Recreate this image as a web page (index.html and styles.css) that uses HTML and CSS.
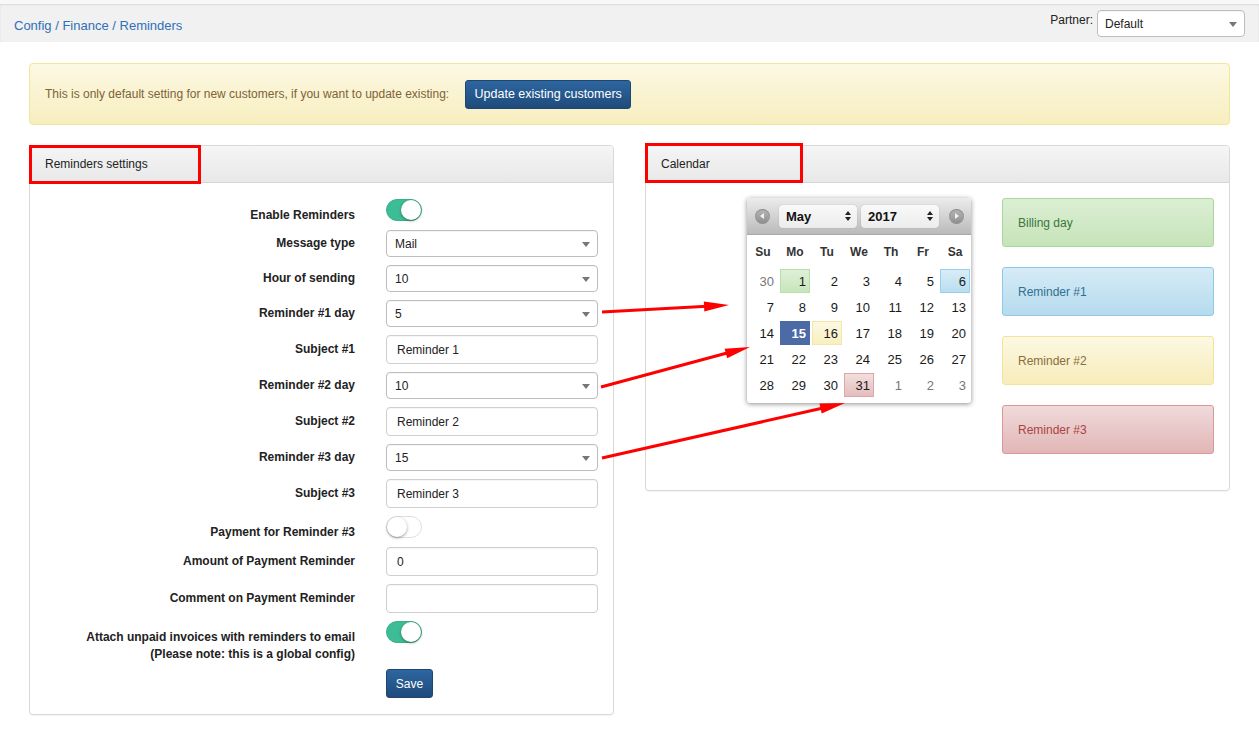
FILE: index.html
```html
<!DOCTYPE html>
<html>
<head>
<meta charset="utf-8">
<title>Reminders</title>
<link rel="stylesheet" href="styles.css">
</head>
<body>
<div class="topstrip"></div>
<header class="topbar">
  <div class="crumbs"><a>Config</a> / <a>Finance</a> / <a>Reminders</a></div>
  <div class="partner">
    <span class="partner-label">Partner:</span>
    <div class="select partner-select"><span>Default</span><i class="caret"></i></div>
  </div>
</header>

<main class="content">
  <div class="alert">
    <span>This is only default setting for new customers, if you want to update existing:</span>
    <button class="btn btn-primary btn-update">Update existing customers</button>
  </div>

  <div class="panels">
    <section class="panel panel-left">
      <div class="panel-heading"><span>Reminders settings</span><div class="mark mark-left"></div></div>
      <div class="panel-body form">
        <label class="lbl lbl-t">Enable Reminders</label>
        <div class="toggle on"><i></i></div>

        <label class="lbl">Message type</label>
        <div class="select"><span>Mail</span><i class="caret"></i></div>

        <label class="lbl">Hour of sending</label>
        <div class="select"><span>10</span><i class="caret"></i></div>

        <label class="lbl">Reminder #1 day</label>
        <div class="select"><span>5</span><i class="caret"></i></div>

        <label class="lbl">Subject #1</label>
        <div class="input">Reminder 1</div>

        <label class="lbl">Reminder #2 day</label>
        <div class="select"><span>10</span><i class="caret"></i></div>

        <label class="lbl">Subject #2</label>
        <div class="input">Reminder 2</div>

        <label class="lbl">Reminder #3 day</label>
        <div class="select"><span>15</span><i class="caret"></i></div>

        <label class="lbl">Subject #3</label>
        <div class="input">Reminder 3</div>

        <label class="lbl lbl-t">Payment for Reminder #3</label>
        <div class="toggle off"><i></i></div>

        <label class="lbl">Amount of Payment Reminder</label>
        <div class="input">0</div>

        <label class="lbl">Comment on Payment Reminder</label>
        <div class="input"></div>

        <label class="lbl lbl-t">Attach unpaid invoices with reminders to email<br>(Please note: this is a global config)</label>
        <div class="toggle on"><i></i></div>

        <div></div>
        <div><button class="btn btn-primary btn-save">Save</button></div>
      </div>
    </section>

    <section class="panel panel-right">
      <div class="panel-heading"><span>Calendar</span><div class="mark mark-right"></div></div>
      <div class="panel-body cal-body">
        <div class="datepicker">
          <div class="dp-head">
            <span class="dp-nav dp-prev"></span>
            <div class="dp-select dp-month"><b>May</b><svg class="updown" width="6" height="10" viewBox="0 0 6 10"><path d="M3 0L6 4H0z M3 10L0 6H6z" fill="#222"/></svg></div>
            <div class="dp-select dp-year"><b>2017</b><svg class="updown" width="6" height="10" viewBox="0 0 6 10"><path d="M3 0L6 4H0z M3 10L0 6H6z" fill="#222"/></svg></div>
            <span class="dp-nav dp-next"></span>
          </div>
          <div class="dp-grid dp-dow">
            <span>Su</span><span>Mo</span><span>Tu</span><span>We</span><span>Th</span><span>Fr</span><span>Sa</span>
          </div>
          <div class="dp-grid dp-days">
            <span class="other">30</span><span class="d-green">1</span><span>2</span><span>3</span><span>4</span><span>5</span><span class="d-blue">6</span>
            <span>7</span><span>8</span><span>9</span><span>10</span><span>11</span><span>12</span><span>13</span>
            <span>14</span><span class="d-active">15</span><span class="d-yellow">16</span><span>17</span><span>18</span><span>19</span><span>20</span>
            <span>21</span><span>22</span><span>23</span><span>24</span><span>25</span><span>26</span><span>27</span>
            <span>28</span><span>29</span><span>30</span><span class="d-red">31</span><span class="other">1</span><span class="other">2</span><span class="other">3</span>
          </div>
        </div>
        <div class="legend">
          <div class="tag tag-success">Billing day</div>
          <div class="tag tag-info">Reminder #1</div>
          <div class="tag tag-warning">Reminder #2</div>
          <div class="tag tag-danger">Reminder #3</div>
        </div>
      </div>
    </section>
  </div>
</main>

<svg class="arrows" width="1259" height="731" viewBox="0 0 1259 731">
  <g fill="#ff0000" stroke="none">
    <line x1="602" y1="312" x2="707" y2="306.2" stroke="#ff0000" stroke-width="3"/>
    <polygon points="729,305 704.3,311.4 703.8,301.4"/>
    <line x1="601" y1="387" x2="728" y2="352.8" stroke="#ff0000" stroke-width="3"/>
    <polygon points="750,347 727.2,358.3 724.6,348.7"/>
    <line x1="602" y1="458" x2="823" y2="408" stroke="#ff0000" stroke-width="3"/>
    <polygon points="845,403 821.7,413.4 819.5,403.6"/>
  </g>
</svg>
</body>
</html>
```

FILE: styles.css
```css
* { box-sizing: border-box; }

html, body {
  margin: 0;
  padding: 0;
  background: #fff;
}

body {
  font-family: "Liberation Sans", Arial, Helvetica, sans-serif;
  font-size: 12px;
  color: #333;
  width: 1259px;
  height: 731px;
  overflow: hidden;
  position: relative;
}

.topstrip {
  height: 4px;
  background: #f8f8f8;
}

.topbar {
  height: 38px;
  background: #f1f1f1;
  box-shadow: inset 0 1px 2px rgba(0, 0, 0, 0.10);
  display: flex;
  justify-content: space-between;
  align-items: center;
  padding: 0 14px;
}

.crumbs {
  font-size: 13px;
  color: #2f70b8;
  padding-top: 4px;
}

.crumbs a { color: #2f70b8; }

.partner {
  display: flex;
  align-items: flex-start;
  height: 27px;
  margin-top: 1px;
}

.partner-label {
  color: #222;
  margin-right: 4px;
  padding-top: 3px;
}

.select, .input {
  position: relative;
  height: 27px;
  width: 212px;
  border: 1px solid #bdbdbd;
  border-radius: 4px;
  background: #fff;
  display: flex;
  align-items: center;
  padding-left: 8px;
  color: #222;
  box-shadow: inset 0 1px 1px rgba(0, 0, 0, 0.04);
}

.input {
  height: 29px;
  padding-left: 10px;
  border-color: #cfcfcf;
}

.partner-select {
  width: 148px;
  padding-left: 7px;
}

.caret {
  position: absolute;
  right: 7px;
  top: 50%;
  margin-top: -2px;
  width: 0;
  height: 0;
  border-left: 4px solid transparent;
  border-right: 4px solid transparent;
  border-top: 5px solid #777;
}

.content {
  padding: 21px 29px 0 29px;
}

.alert {
  height: 62px;
  display: flex;
  align-items: center;
  padding: 0 15px;
  border: 1px solid #f3e59a;
  border-radius: 4px;
  background: linear-gradient(#fcf8e3, #f7eebf);
  color: #7d6335;
}

.btn {
  font-family: "Liberation Sans", Arial, Helvetica, sans-serif;
  font-size: 12px;
  color: #fff;
  border-radius: 3px;
  cursor: pointer;
  padding: 0;
}

.btn-primary {
  background: linear-gradient(#2d66a0, #1f4b7b);
  border: 1px solid #1d4672;
}

.btn-update {
  margin-left: 16px;
  height: 29px;
  width: 166px;
  font-size: 12.5px;
}

.btn-save {
  height: 29px;
  width: 47px;
}

.panels {
  margin-top: 20px;
  display: grid;
  grid-template-columns: 585px 585px;
  column-gap: 31px;
  align-items: start;
}

.panel {
  border: 1px solid #d9d9d9;
  border-radius: 4px;
  background: #fff;
  box-shadow: 0 1px 1px rgba(0, 0, 0, 0.05);
}

.panel-heading {
  position: relative;
  height: 37px;
  background: linear-gradient(#f5f5f5, #e8e8e8);
  border-bottom: 1px solid #d6d6d6;
  border-radius: 3px 3px 0 0;
  display: flex;
  align-items: center;
  padding-left: 15px;
  color: #222;
}

.mark {
  position: absolute;
  border: 3px solid #ff0000;
}

.mark-left {
  left: -1px;
  top: -1px;
  width: 172px;
  height: 39px;
}

.mark-right {
  left: -1px;
  top: -3px;
  width: 158px;
  height: 40px;
}

.form {
  display: grid;
  grid-template-columns: 325px 212px;
  column-gap: 31px;
  row-gap: 8px;
  align-items: center;
  padding: 16px 0 16px 0;
}

.lbl {
  text-align: right;
  font-weight: bold;
  color: #222;
  line-height: 17px;
}

.lbl-t {
  align-self: start;
  padding-top: 8px;
  margin-bottom: -2px;
}

.toggle {
  align-self: start;
  position: relative;
  width: 36px;
  height: 22px;
  border-radius: 11px;
}

.toggle i {
  position: absolute;
  top: 1px;
  width: 20px;
  height: 20px;
  border-radius: 50%;
  background: #fff;
  box-shadow: 0 1px 3px rgba(0, 0, 0, 0.4);
}

.toggle.on {
  background: #3dbd96;
  border: 1px solid #36b08b;
}

.toggle.on i {
  right: 0;
  top: 0;
}

.toggle.off {
  background: #fff;
  border: 1px solid #dfdfdf;
}

.toggle.off i {
  left: 0;
  top: 0;
}

/* Calendar panel */
.cal-body {
  display: grid;
  grid-template-columns: 325px 212px;
  column-gap: 31px;
  align-items: start;
  padding: 15px 0 36px 0;
}

.datepicker {
  justify-self: end;
  width: 224px;
  background: #fff;
  border-radius: 3px;
  box-shadow: 0 1px 5px rgba(0, 0, 0, 0.45);
  padding-bottom: 6px;
}

.dp-head {
  height: 37px;
  background: linear-gradient(#ececec, #bababa);
  border-bottom: 1px solid #a9a9a9;
  border-radius: 3px 3px 0 0;
  display: flex;
  align-items: center;
  padding-left: 8px;
}

.dp-nav {
  position: relative;
  width: 15px;
  height: 15px;
  border-radius: 50%;
  background: linear-gradient(#b7b7b7, #8d8d8d);
  box-shadow: inset 0 1px 1px rgba(0, 0, 0, 0.25);
}

.dp-prev::after, .dp-next::after {
  content: "";
  position: absolute;
  top: 4px;
  width: 0;
  height: 0;
  border-top: 3.5px solid transparent;
  border-bottom: 3.5px solid transparent;
}

.dp-prev::after {
  left: 5px;
  border-right: 4px solid #f2f2f2;
}

.dp-next::after {
  left: 6px;
  border-left: 4px solid #f2f2f2;
}

.dp-select {
  height: 23px;
  width: 78px;
  border-radius: 4px;
  background: linear-gradient(#f9f9f9, #ececec);
  box-shadow: 0 0 1px rgba(0, 0, 0, 0.35);
  display: flex;
  align-items: center;
  justify-content: space-between;
  padding: 0 6px 0 7px;
  font-size: 13px;
  color: #111;
}

.dp-month { margin-left: 9px; }
.dp-year { margin-left: 4px; }
.dp-next { margin-left: 10px; }

.updown { display: block; }

.dp-grid {
  display: grid;
  grid-template-columns: repeat(7, 30px);
  column-gap: 2px;
  padding: 0 1px;
}

.dp-dow {
  margin-top: 7px;
  height: 20px;
  align-items: center;
  text-align: center;
  font-weight: bold;
  color: #333;
}

.dp-days {
  margin-top: 7px;
  grid-auto-rows: 24px;
  row-gap: 2px;
}

.dp-days span {
  display: flex;
  align-items: center;
  justify-content: flex-end;
  padding-right: 3px;
  font-size: 13px;
  color: #1a1a1a;
  border: 1px solid transparent;
}

.dp-days span.other { color: #777; }

.dp-days span.d-green {
  background: linear-gradient(#dff0d8, #c8e5bc);
  border-color: #b9dfa9;
}

.dp-days span.d-blue {
  background: linear-gradient(#d9edf7, #b9def0);
  border-color: #9acfea;
}

.dp-days span.d-yellow {
  background: linear-gradient(#fcf8e3, #f8efc0);
  border-color: #f3e7a8;
}

.dp-days span.d-red {
  background: linear-gradient(#f2dede, #e4bebe);
  border-color: #dca7a7;
}

.dp-days span.d-active {
  background: #4b6aa6;
  color: #fff;
  font-weight: bold;
}

.legend {
  display: flex;
  flex-direction: column;
  gap: 20px;
}

.tag {
  height: 49px;
  border: 1px solid;
  border-radius: 3px;
  display: flex;
  align-items: center;
  padding-left: 15px;
}

.tag-success {
  background: linear-gradient(#dcefd5, #c5e3b8);
  border-color: #a9d89a;
  color: #3c763d;
}

.tag-info {
  background: linear-gradient(#d6ebf6, #b5dbee);
  border-color: #8ec9eb;
  color: #31708f;
}

.tag-warning {
  background: linear-gradient(#fcf8e3, #f7ecba);
  border-color: #f4e49a;
  color: #8a6d3b;
}

.tag-danger {
  background: linear-gradient(#f0dadb, #e2b6b6);
  border-color: #d99898;
  color: #a94442;
}

.arrows {
  position: absolute;
  left: 0;
  top: 0;
  pointer-events: none;
}
```
